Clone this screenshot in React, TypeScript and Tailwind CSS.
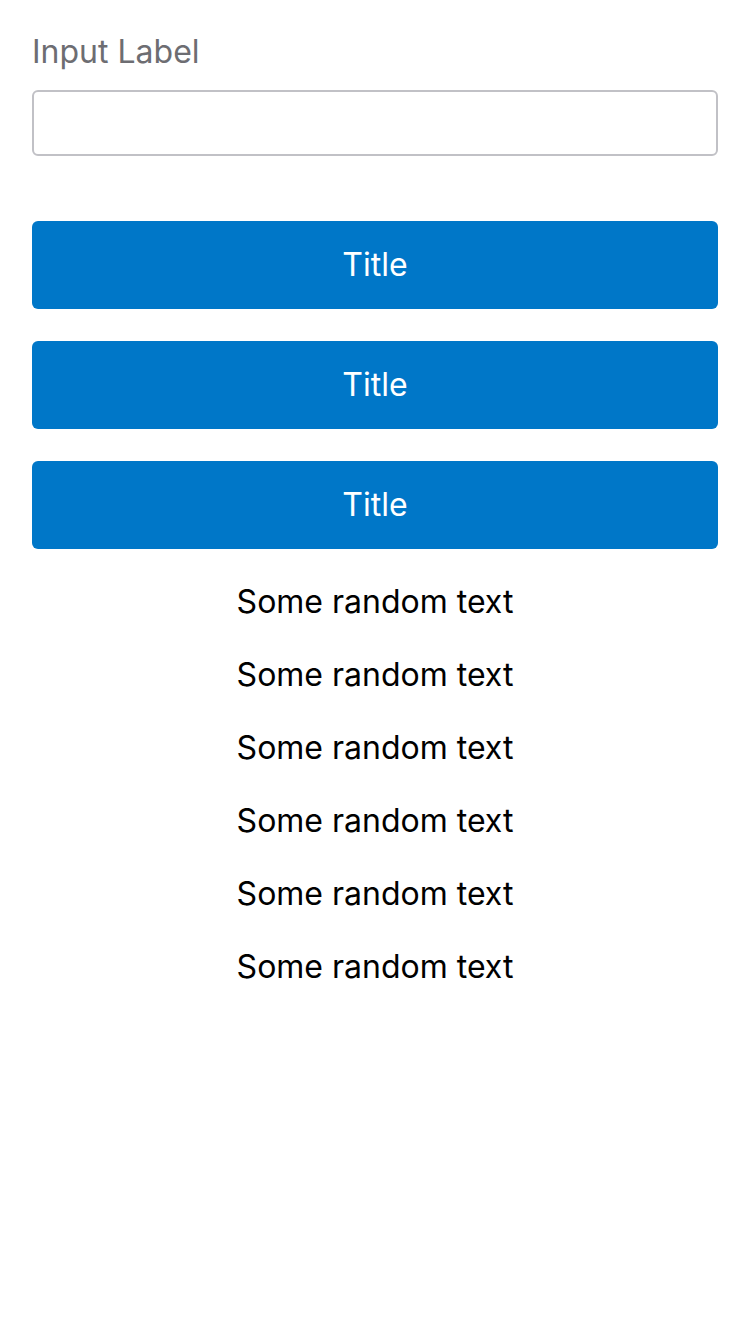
import React from 'react';

const BUTTONS = ['Title', 'Title', 'Title'];
const LINES = Array.from({ length: 6 }, () => 'Some random text');

export default function App() {
  return (
    <div className="min-h-[1334px] w-[750px] bg-white px-8 pt-[32px] font-['Inter','Liberation_Sans',sans-serif]">
      <label className="block text-[32px] leading-[40px] text-[#6d6d72]">Input Label</label>
      <input
        type="text"
        className="mt-[18px] block h-[66px] w-full rounded-[6px] border-2 border-[#c1c1c6] bg-white px-4 text-[28px] outline-none"
      />
      <div className="mt-[65px] flex flex-col gap-8">
        {BUTTONS.map((t, i) => (
          <button
            key={i}
            className="flex h-[88px] w-full items-center justify-center rounded-[6px] bg-[#0077c8] text-[32px] text-white"
          >
            {t}
          </button>
        ))}
      </div>
      <div className="mt-[16px] flex flex-col items-center">
        {LINES.map((l, i) => (
          <p key={i} className="text-[32px] leading-[73px] text-black">
            {l}
          </p>
        ))}
      </div>
    </div>
  );
}
